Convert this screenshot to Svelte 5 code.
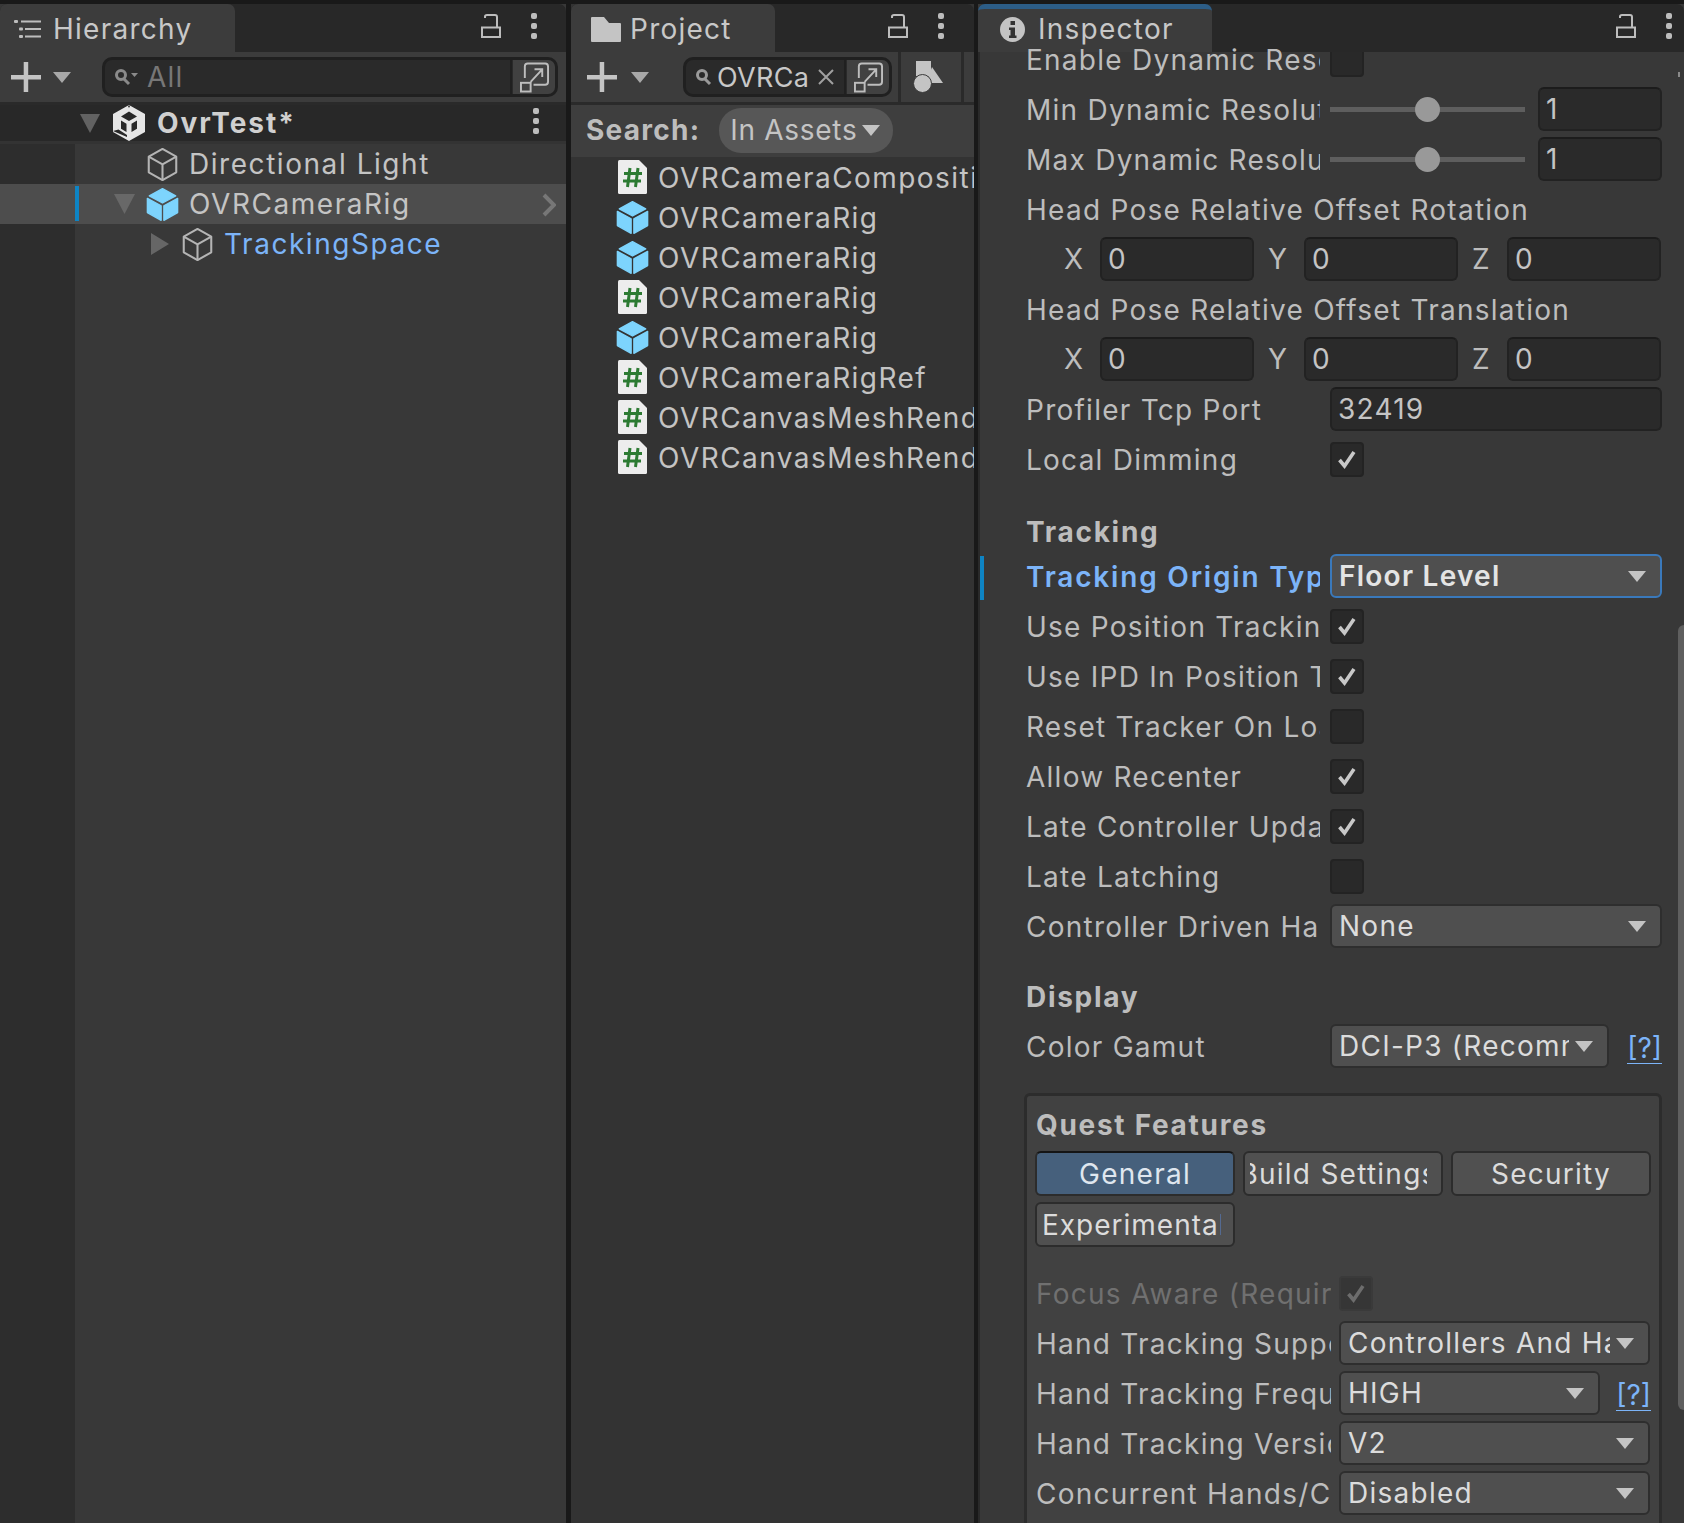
<script>
  const projectItems = [
    { kind: 'script', name: 'OVRCameraCompositionManager' },
    { kind: 'prefab', name: 'OVRCameraRig' },
    { kind: 'prefab', name: 'OVRCameraRig' },
    { kind: 'script', name: 'OVRCameraRig' },
    { kind: 'prefab', name: 'OVRCameraRig' },
    { kind: 'script', name: 'OVRCameraRigRef' },
    { kind: 'script', name: 'OVRCanvasMeshRenderer' },
    { kind: 'script', name: 'OVRCanvasMeshRenderer' }
  ];

  const trackingChecks = [
    { label: 'Use Position Tracking', on: true },
    { label: 'Use IPD In Position Tracking', on: true },
    { label: 'Reset Tracker On Load', on: false },
    { label: 'Allow Recenter', on: true },
    { label: 'Late Controller Update', on: true },
    { label: 'Late Latching', on: false }
  ];
</script>

{#snippet cube()}
  <svg class="icon" width="33" height="35" viewBox="0 0 24 25" fill="none" stroke="#b4b4b4" stroke-width="1.5" stroke-linejoin="round">
    <path d="M12 1.2 22 6.8V18.2L12 23.8 2 18.2V6.8Z" />
    <path d="M2 6.8 12 12.4 22 6.8M12 12.4V23.8" />
  </svg>
{/snippet}

{#snippet prefab()}
  <svg class="icon" width="33" height="35" viewBox="0 0 24 25" fill="#7dd4fd" stroke="#7dd4fd" stroke-linejoin="round">
    <path d="M12 1 21.6 6.2 12 11.4 2.4 6.2Z" />
    <path d="M1 8 11 13.4V24L1 18.4Z" />
    <path d="M23 8 13 13.4V24L23 18.4Z" />
  </svg>
{/snippet}

{#snippet script()}
  <svg class="icon" width="29" height="34" viewBox="0 0 29 34">
    <path d="M0 1.5Q0 0 1.5 0H21L29 8V32.5Q29 34 27.5 34H1.5Q0 34 0 32.5Z" fill="#ededed" />
    <path d="M12 8 9.5 27M20 8 17.5 27M6 13.5H24M5 21H23" stroke="#2c7a32" stroke-width="3" fill="none" />
  </svg>
{/snippet}

{#snippet lock()}
  <svg class="icon" width="20" height="24" viewBox="0 0 20 24" fill="none" stroke="#bdbdbd" stroke-width="2">
    <path d="M1 13.5H19V23H1Z" />
    <path d="M4 4V2.5Q4 1 6 1H14Q16 1 16 3V13.5" />
  </svg>
{/snippet}

{#snippet kebab()}
  <svg class="icon" width="6" height="26" viewBox="0 0 6 26" fill="#bdbdbd">
    <rect y="0" width="6" height="6" rx="2" />
    <rect y="10" width="6" height="6" rx="2" />
    <rect y="20" width="6" height="6" rx="2" />
  </svg>
{/snippet}

{#snippet plus()}
  <svg class="icon" width="30" height="30" viewBox="0 0 30 30" fill="#c4c4c4">
    <rect x="0" y="13" width="30" height="4.5" />
    <rect x="12.7" y="0" width="4.5" height="30" />
  </svg>
{/snippet}

{#snippet caret(color = '#b4b4b4', w = 18, h = 11)}
  <svg class="icon" width={w} height={h} viewBox="0 0 18 11" preserveAspectRatio="none"><path d="M0 0H18L9 11Z" fill={color} /></svg>
{/snippet}

{#snippet picker()}
  <svg class="icon" width="29" height="31" viewBox="0 0 30 31" fill="none" stroke="#bdbdbd" stroke-width="2">
    <path d="M5 16V4Q5 1 8 1H26Q29 1 29 4V20Q29 23 26 23H14" />
    <rect x="1" y="21" width="10" height="9" />
    <path d="M11 20 23 7M15 7H23V15" />
  </svg>
{/snippet}

{#snippet check()}
  <svg class="tick" width="20" height="20" viewBox="0 0 20 20" fill="none"><path d="M2.5 11 7.5 17 17 3" stroke="currentColor" stroke-width="3.6" /></svg>
{/snippet}

{#snippet checkbox(on, dim = false)}
  <span class="box" class:dim>{#if on}{@render check()}{/if}</span>
{/snippet}

{#snippet dropdown(text, extra = '')}
  <div class="drop {extra}"><span class="drop-text">{text}</span>{@render caret('#c4c4c4', 18, 11)}</div>
{/snippet}

{#snippet xyz()}
  <div class="xyz">
    {#each ['X', 'Y', 'Z'] as axis}
      <span class="axis">{axis}</span><span class="field">0</span>
    {/each}
  </div>
{/snippet}

{#snippet slider(text)}
  <div class="row">
    <span class="label">{text}</span>
    <div class="ctrl slider-wrap">
      <div class="slider"><span class="knob"></span></div>
      <span class="field num">1</span>
    </div>
  </div>
{/snippet}

<div class="app">
  <section class="panel hierarchy">
    <header class="strip">
      <div class="tab hier-tab">
        <svg class="icon" width="27" height="20" viewBox="0 0 27 20" fill="#bdbdbd">
          <rect x="0" y="1" width="4" height="3" rx="1" /><rect x="7" y="1.5" width="20" height="2" />
          <rect x="5" y="8.5" width="4" height="3" rx="1" /><rect x="11" y="9" width="16" height="2" />
          <rect x="5" y="16" width="4" height="3" rx="1" /><rect x="11" y="16.5" width="16" height="2" />
        </svg>
        <span>Hierarchy</span>
      </div>
      <div class="strip-tools">{@render lock()}{@render kebab()}</div>
    </header>
    <div class="toolbar">
      <div class="add">{@render plus()}{@render caret('#a8a8a8', 18, 11)}</div>
      <div class="search wide">
        <div class="search-in">
          <svg class="icon" width="24" height="18" viewBox="0 0 24 18" fill="none" stroke="#8a8a8a" stroke-width="3">
            <circle cx="7" cy="7" r="4.5" /><path d="M10 11 15 16" />
            <path d="M17 5H24L20.5 9Z" fill="#8a8a8a" stroke="none" />
          </svg>
          <span class="faint">All</span>
        </div>
        <div class="pick">{@render picker()}</div>
      </div>
    </div>
    <div class="tree">
      <div class="scene">
        <span class="fold-a">{@render caret('#626262', 20, 19)}</span>
        <svg class="icon" width="32" height="36" viewBox="0 0 32 36">
          <path fill="#e6e6e6" fill-rule="evenodd" d="M16 0 32 9V27L16 36 0 27V9ZM16 6.5 24 11.5 16 16 8 11.5ZM8 15.5 13.5 18.8V27L8 23.8ZM24 15.5 18.5 18.8V27L24 23.8ZM14.8 0.8 16 3 17.2 0.8ZM0 26 5.5 24.5 14 30 14 32Z" />
        </svg>
        <span class="scene-name">OvrTest*</span>
        <span class="scene-menu">{@render kebab()}</span>
      </div>
      <div class="nodes">
        <div class="gutter"></div>
        <div class="node-list">
          <div class="node lv1">{@render cube()}<span>Directional Light</span></div>
          <div class="node lv1 picked">
            <span class="mark"></span>
            <span class="fold-b">{@render caret('#686868', 21, 20)}</span>
            {@render prefab()}<span>OVRCameraRig</span>
            <svg class="chev" width="14" height="24" viewBox="0 0 14 24" fill="none" stroke="#777" stroke-width="4"><path d="M2 2 12 12 2 22" /></svg>
          </div>
          <div class="node lv2">
            <svg class="fold-c" width="18" height="22" viewBox="0 0 18 22"><path d="M0 0 18 11 0 22Z" fill="#666" /></svg>
            {@render cube()}<span class="override">TrackingSpace</span>
          </div>
        </div>
      </div>
    </div>
  </section>

  <section class="panel project">
    <header class="strip">
      <div class="tab proj-tab">
        <svg class="icon" width="30" height="25" viewBox="0 0 30 25" fill="#c4c4c4"><path d="M0 1Q0 0 1 0H13L18 6H29Q30 6 30 7V24Q30 25 29 25H1Q0 25 0 24Z" /></svg>
        <span>Project</span>
      </div>
      <div class="strip-tools">{@render lock()}{@render kebab()}</div>
    </header>
    <div class="toolbar">
      <div class="add proj-add">{@render plus()}{@render caret('#a8a8a8', 18, 11)}</div>
      <div class="search narrow">
        <div class="search-in">
          <svg class="icon" width="18" height="18" viewBox="0 0 18 18" fill="none" stroke="#9a9a9a" stroke-width="3"><circle cx="7" cy="7" r="4.5" /><path d="M10 11 15 16" /></svg>
          <span class="query">OVRCa</span>
          <svg class="icon" width="16" height="16" viewBox="0 0 16 16" stroke="#a0a0a0" stroke-width="2"><path d="M1 1 15 15M15 1 1 15" /></svg>
        </div>
        <div class="pick">{@render picker()}</div>
      </div>
      <div class="filter">
        <svg class="icon" width="30" height="32" viewBox="0 0 30 32" fill="#c4c4c4">
          <rect x="3" y="0" width="15" height="15" />
          <path d="M19 6 30 22H13Z" />
          <circle cx="9.5" cy="22.5" r="9" stroke="#3c3c3c" stroke-width="1" />
        </svg>
      </div>
    </div>
    <div class="search-bar">
      <b>Search:</b>
      <div class="scope"><span>In Assets</span>{@render caret('#c4c4c4', 18, 11)}</div>
    </div>
    <div class="files">
      {#each projectItems as item}
        <div class="file">
          <span class="file-ico">{#if item.kind === 'script'}{@render script()}{:else}{@render prefab()}{/if}</span>
          <span>{item.name}</span>
        </div>
      {/each}
    </div>
  </section>

  <section class="panel inspector">
    <header class="strip">
      <div class="tab insp-tab">
        <svg class="icon" width="25" height="25" viewBox="0 0 25 25">
          <circle cx="12.5" cy="12.5" r="12.5" fill="#c4c4c4" />
          <rect x="10.5" y="4" width="4.5" height="4" fill="#333" />
          <path d="M9 10.5H15V18.5H16.5V21H9V18.5H10.5V13H9Z" fill="#333" />
        </svg>
        <span>Inspector</span>
      </div>
      <div class="strip-tools">{@render lock()}{@render kebab()}</div>
    </header>
    <div class="body">
      <div class="rows">
        <div class="row"><span class="label top">Enable Dynamic Resolution</span><div class="ctrl">{@render checkbox(false)}</div></div>
        {@render slider('Min Dynamic Resolution Scale')}
        {@render slider('Max Dynamic Resolution Scale')}
        <div class="row"><span class="label full">Head Pose Relative Offset Rotation</span></div>
        {@render xyz()}
        <div class="row"><span class="label full">Head Pose Relative Offset Translation</span></div>
        {@render xyz()}
        <div class="row"><span class="label">Profiler Tcp Port</span><div class="ctrl"><span class="field grow">32419</span></div></div>
        <div class="row"><span class="label">Local Dimming</span><div class="ctrl">{@render checkbox(true)}</div></div>

        <div class="head tracking">Tracking</div>
        <div class="row modified">
          <span class="mark"></span>
          <span class="label override strong">Tracking Origin Type</span>
          <div class="ctrl">{@render dropdown('Floor Level', 'focus')}</div>
        </div>
        {#each trackingChecks as c}
          <div class="row"><span class="label">{c.label}</span><div class="ctrl">{@render checkbox(c.on)}</div></div>
        {/each}
        <div class="row"><span class="label">Controller Driven Hand Poses</span><div class="ctrl">{@render dropdown('None')}</div></div>

        <div class="head display">Display</div>
        <div class="row">
          <span class="label">Color Gamut</span>
          <div class="ctrl helped">{@render dropdown('DCI-P3 (Recommended)')}<span class="help">[?]</span></div>
        </div>

        <div class="quest">
          <div class="quest-title">Quest Features</div>
          <div class="qtabs">
            <button class="qtab on">General</button>
            <button class="qtab clip"><span>Build Settings</span></button>
            <button class="qtab">Security</button>
            <button class="qtab clip left"><span>Experimental</span></button>
          </div>
          <div class="row q first dimmed"><span class="label">Focus Aware (Required)</span><div class="ctrl">{@render checkbox(true, true)}</div></div>
          <div class="row q"><span class="label">Hand Tracking Support</span><div class="ctrl">{@render dropdown('Controllers And Hands')}</div></div>
          <div class="row q">
            <span class="label">Hand Tracking Frequency</span>
            <div class="ctrl helped">{@render dropdown('HIGH')}<span class="help">[?]</span></div>
          </div>
          <div class="row q"><span class="label">Hand Tracking Version</span><div class="ctrl">{@render dropdown('V2')}</div></div>
          <div class="row q"><span class="label">Concurrent Hands/Controllers</span><div class="ctrl">{@render dropdown('Disabled')}</div></div>
        </div>
      </div>
      <div class="scroll-arrow"></div>
      <div class="thumb"></div>
    </div>
  </section>
</div>

<style>
  :global(body) {
    margin: 0;
    background: #191919;
  }
  .app {
    display: flex;
    width: 1684px;
    height: 1523px;
    overflow: hidden;
    background: #191919;
    font-family: Inter, "Noto Sans", sans-serif;
    font-size: 28px;
    letter-spacing: 1.25px;
    color: #c4c4c4;
  }
  .icon { flex: none; display: block; }

  .panel {
    display: flex;
    flex-direction: column;
    height: 100%;
    margin-top: 4px;
    background: #383838;
  }
  .hierarchy { width: 566px; }
  .project { width: 403px; margin-left: 5px; background: #333; }
  .inspector { width: 706px; margin-left: 4px; background: #383838; }

  .strip {
    position: relative;
    z-index: 2;
    display: flex;
    justify-content: space-between;
    height: 48px;
    flex: none;
    background: #282828;
    border-radius: 7px 7px 0 0;
  }
  .tab {
    display: flex;
    align-items: center;
    gap: 12px;
    height: 48px;
    padding-top: 2px;
    background: #3c3c3c;
    border-radius: 7px 7px 0 0;
    box-sizing: border-box;
    color: #c8c8c8;
    white-space: nowrap;
  }
  .hier-tab { width: 235px; padding-left: 14px; }
  .proj-tab { width: 204px; padding-left: 20px; gap: 9px; }
  .insp-tab {
    width: 234px;
    padding: 0 0 3px 22px;
    gap: 13px;
    border-top: 5px solid #2c5d87;
  }
  .strip-tools {
    display: flex;
    align-items: center;
    gap: 30px;
    padding: 0 29px 4px 0;
  }
  .project .strip-tools { padding-right: 30px; }
  .inspector .strip-tools { padding-right: 12px; }

  .toolbar {
    display: flex;
    align-items: center;
    height: 50px;
    flex: none;
    background: #3c3c3c;
    border-bottom: 3px solid #2a2a2a;
  }
  .add {
    display: flex;
    align-items: center;
    gap: 12px;
    width: 102px;
    padding-left: 11px;
    box-sizing: border-box;
  }
  .proj-add { width: 112px; padding-left: 16px; gap: 14px; }
  .search {
    display: flex;
    height: 40px;
    box-sizing: border-box;
    border-radius: 10px;
    border: 3px solid #202020;
    background: #2a2a2a;
    overflow: hidden;
  }
  .search.wide { width: 456px; }
  .search.narrow { width: 209px; }
  .search-in {
    flex: 1;
    display: flex;
    align-items: center;
    gap: 9px;
    padding-left: 9px;
    min-width: 0;
    border-right: 2px solid #202020;
  }
  .faint { color: #777; }
  .query { font-size: 27px; letter-spacing: 0.3px; color: #c8c8c8; margin-left: -5px; }
  .pick {
    width: 42px;
    flex: none;
    display: flex;
    align-items: center;
    justify-content: center;
    background: #414141;
    margin-left: 1px;
  }
  .filter {
    width: 66px;
    height: 50px;
    margin-left: 6px;
    padding-right: 6px;
    display: flex;
    align-items: center;
    justify-content: center;
    border-left: 3px solid #2a2a2a;
    border-right: 3px solid #2a2a2a;
    box-sizing: border-box;
  }

  .tree { flex: 1; display: flex; flex-direction: column; }
  .scene {
    display: flex;
    align-items: center;
    height: 36px;
    background: #282828;
    border-bottom: 3px solid #333;
    padding-left: 80px;
    position: relative;
  }
  .fold-a { width: 33px; }
  .scene-name { font-weight: 700; letter-spacing: 2px; margin-left: 12px; color: #d0d0d0; }
  .scene-menu { position: absolute; left: 533px; top: 3px; }
  .nodes { flex: 1; display: flex; }
  .gutter { width: 75px; background: #2d2d2d; flex: none; }
  .node-list { flex: 1; }
  .node {
    position: relative;
    display: flex;
    align-items: center;
    gap: 10px;
    height: 40px;
    box-sizing: border-box;
    letter-spacing: 1.55px;
  }
  .lv1 { padding-left: 71px; }
  .lv2 { padding-left: 106px; }
  .picked { background: #4d4d4d; margin-left: -75px; padding-left: 146px; }
  .picked .mark { left: 75px; top: 2px; height: 35px; }
  .fold-b { position: absolute; left: 114px; top: 10px; }
  .fold-c { position: absolute; left: 76px; top: 9px; }
  .chev { position: absolute; right: 10px; top: 9px; }
  .mark { position: absolute; width: 4px; background: #0e84c4; }
  .override { color: #7cb4f8; }

  .search-bar {
    display: flex;
    align-items: center;
    height: 52px;
    flex: none;
    padding: 0 0 2px 15px;
    box-sizing: border-box;
    gap: 19px;
    background: #3e3e3e;
  }
  .search-bar b { font-weight: 700; color: #bdbdbd; }
  .scope {
    display: flex;
    align-items: center;
    gap: 5px;
    height: 45px;
    width: 174px;
    padding-left: 11px;
    box-sizing: border-box;
    border-radius: 22px;
    background: #575757;
    white-space: nowrap;
    letter-spacing: 0.7px;
  }
  .files { flex: 1; overflow: hidden; padding-top: 1px; }
  .file {
    display: flex;
    align-items: center;
    height: 40px;
    white-space: nowrap;
    position: relative;
    padding-left: 87px;
    letter-spacing: 1.45px;
  }
  .file-ico {
    position: absolute;
    left: 45px;
    top: 2px;
    width: 33px;
    height: 35px;
    display: flex;
    justify-content: center;
  }

  .body {
    position: relative;
    flex: 1;
    min-height: 0;
    border-left: 2px solid #2a2a2a;
  }
  .rows {
    margin-top: -17px;
    margin-left: 46px;
    width: 636px;
  }
  .row {
    display: flex;
    align-items: center;
    height: 50px;
    position: relative;
  }
  .label {
    width: 294px;
    margin-right: 10px;
    flex: none;
    overflow: hidden;
    white-space: nowrap;
    color: #bdbdbd;
    box-sizing: border-box;
  }
  .label.top { position: relative; z-index: 3; }
  .label.full { width: auto; overflow: visible; }
  .strong { font-weight: 600; letter-spacing: 1.8px; color: #7cb4f8; }
  .ctrl { flex: 1; display: flex; align-items: center; min-width: 0; margin-top: -2px; }
  .modified .mark { left: -46px; top: 4px; height: 44px; }

  .box {
    width: 34px;
    height: 35px;
    box-sizing: border-box;
    border-radius: 4px;
    background: #292929;
    border: 2px solid #232323;
    display: flex;
    align-items: center;
    justify-content: center;
    color: #c8c8c8;
  }
  .box.dim { background: #363636; border-color: #3a3a3a; color: #6d6d6d; }

  .field {
    height: 44px;
    box-sizing: border-box;
    display: flex;
    align-items: center;
    padding-left: 6px;
    background: #2a2a2a;
    border: 2px solid #222;
    border-top-color: #1c1c1c;
    border-radius: 6px;
    color: #c4c4c4;
  }
  .grow { flex: 1; }
  .slider-wrap { gap: 13px; }
  .slider {
    flex: 1;
    height: 5px;
    background: #5e5e5e;
    position: relative;
  }
  .knob {
    position: absolute;
    left: 85px;
    top: -10px;
    width: 25px;
    height: 25px;
    border-radius: 50%;
    background: #999;
  }
  .num { width: 124px; flex: none; }

  .xyz {
    display: grid;
    grid-template-columns: 46px 154px 50px 154px 49px 154px;
    align-items: center;
    height: 50px;
    padding: 0 0 2px 28px;
    box-sizing: border-box;
    width: 636px;
  }
  .axis { padding-left: 10px; color: #bdbdbd; }
  .axis:not(:first-child) { padding-left: 14px; }

  .head { font-weight: 700; color: #bdbdbd; display: flex; align-items: center; height: 44px; letter-spacing: 1.7px; }
  .tracking { margin-top: 25px; margin-bottom: -2px; }
  .display { margin-top: 21px; margin-bottom: 2px; height: 47px; }

  .drop {
    flex: 1;
    min-width: 0;
    height: 44px;
    box-sizing: border-box;
    display: flex;
    align-items: center;
    gap: 6px;
    padding: 0 14px 0 7px;
    background: #4f4f4f;
    border: 2px solid #2e2e2e;
    border-radius: 6px;
    color: #dcdcdc;
  }
  .drop.focus { border-color: #3a79bb; font-weight: 600; color: #e4e4e4; }
  .drop-text { flex: 1; overflow: hidden; white-space: nowrap; min-width: 0; }
  .helped { gap: 18px; }
  .help {
    color: #7cb4f8;
    border-bottom: 1px solid #7cb4f8;
    line-height: 30px;
    margin-top: 4px;
    letter-spacing: 0;
  }

  .quest {
    margin-top: 21px;
    margin-left: -2px;
    width: 638px;
    height: 480px;
    box-sizing: border-box;
    background: #414141;
    border: 3px solid #2c2c2c;
    border-radius: 6px;
    padding: 8px 8px 0;
  }
  .quest-title { font-weight: 700; height: 42px; display: flex; align-items: center; color: #bdbdbd; letter-spacing: 1.7px; margin-left: 1px; }
  .qtabs {
    display: grid;
    grid-template-columns: repeat(3, 200px);
    grid-auto-rows: 45px;
    gap: 6px 8px;
    margin-top: 5px;
  }
  .qtab {
    box-sizing: border-box;
    height: 45px;
    padding: 0;
    font: inherit;
    letter-spacing: inherit;
    color: #dcdcdc;
    background: #505050;
    border: 2px solid #2c2c2c;
    border-radius: 6px;
    overflow: hidden;
    white-space: nowrap;
  }
  .qtab.on { background: #46607c; color: #dfe6ee; border-top-color: #151515; }
  .clip { display: flex; justify-content: flex-start; align-items: center; padding-left: 5px; }
  .clip span {
    display: flex;
    justify-content: center;
    width: 177px;
    flex: none;
    overflow: hidden;
  }
  .clip.left span { justify-content: flex-start; width: 179px; letter-spacing: 1px; }
  .q { margin-left: 1px; height: 50px; }
  .q .label { width: 295px; margin-right: 8px; }
  .q.first { margin-top: 22px; }
  .dimmed .label { color: #707070; }
  .q .ctrl { padding-right: 1px; }
  .q .helped { padding-right: 0; gap: 16px; }

  .scroll-arrow {
    position: absolute;
    right: 0;
    top: 20px;
    width: 4px;
    height: 5px;
    border-left: 2px solid #8a8a8a;
  }
  .thumb {
    position: absolute;
    right: 0;
    top: 573px;
    width: 6px;
    height: 785px;
    border-radius: 6px 0 0 6px;
    background: #5f5f5f;
  }
</style>
